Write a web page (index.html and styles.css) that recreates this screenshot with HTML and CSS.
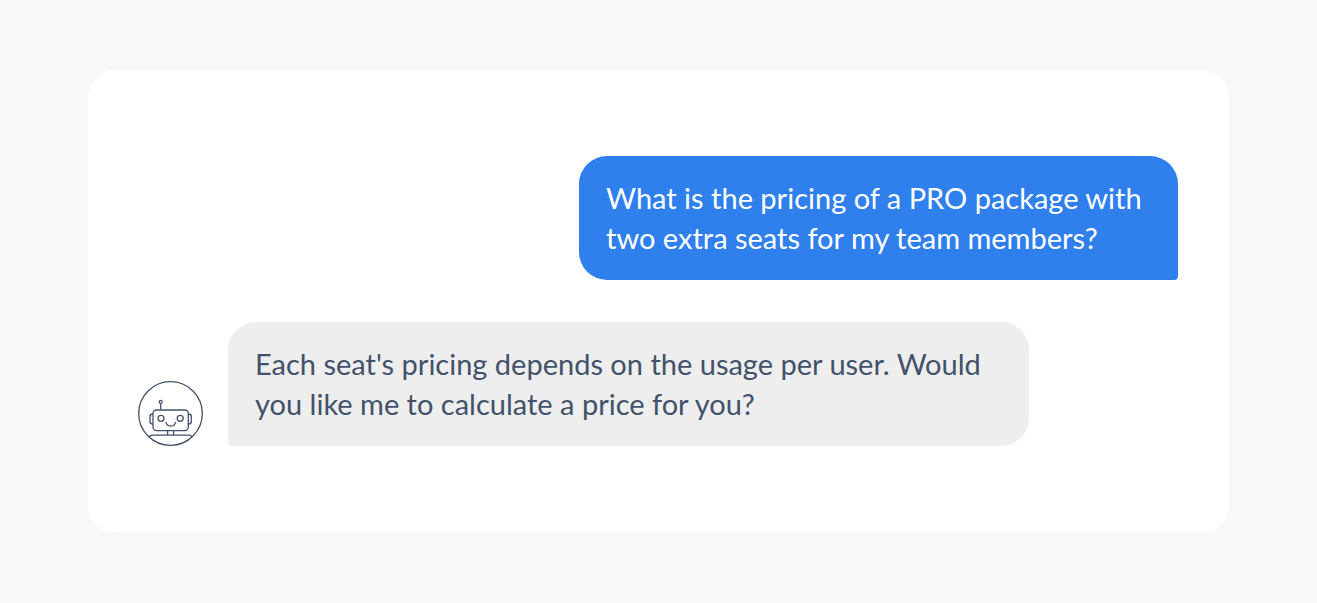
FILE: index.html
```html
<!DOCTYPE html>
<html lang="en">
<head>
    <meta charset="UTF-8">
    <meta name="viewport" content="width=device-width, initial-scale=1.0">
    <title>Chatbot</title>
    <link rel="stylesheet" href="styles.css">
</head>
<body>
    <main class="chat">
        <div class="message user">
            <p class="bubble">What is the pricing of a PRO package with two extra seats for my team members?</p>
        </div>
        <div class="message bot">
            <svg class="avatar" viewBox="0 0 65 65" role="img" aria-label="Bot">
                <circle cx="32.5" cy="32.5" r="31.8"/>
                <!-- antenna -->
                <circle cx="22.7" cy="20.9" r="1.5"/>
                <path d="M22.7 22.4V29"/>
                <!-- head and ears -->
                <rect x="15" y="29" width="35.3" height="20.6" rx="3.5"/>
                <path d="M15 33c-2 0-3 1-3 2.6v5c0 1.6 1 2.6 3 2.6M50.3 33c2 0 3 1 3 2.6v5c0 1.6-1 2.6-3 2.6"/>
                <!-- face -->
                <circle cx="23" cy="37.3" r="3"/>
                <circle cx="42.2" cy="37.3" r="3"/>
                <path d="M28 41c.5 5.4 9 5.4 9.5 0"/>
                <!-- neck and shoulders -->
                <path d="M29.6 49.6v4.6M35.6 49.6v4.6M10.6 56.2q1.4-2 4.4-2h36q2 0 3.2 2"/>
            </svg>
            <p class="bubble">Each seat's pricing depends on the usage per user. Would you like me to calculate a price for you?</p>
        </div>
    </main>
</body>
</html>
```
FILE: styles.css
```css
* {
    box-sizing: border-box;
}
body {
    margin: 0;
    padding: 70px 88px;
    background-color: #f6f8fa;
    font-family: Lato, "Liberation Sans", sans-serif;
    font-size: 29px;
    line-height: 40px;
}
.chat {
    display: flex;
    flex-direction: column;
    gap: 42px;
    padding: 86px 51px 87px 50px;
    background-color: #fff;
    border-radius: 28px;
}
.message {
    display: flex;
    align-items: flex-end;
    gap: 25px;
}
.user {
    justify-content: flex-end;
}
.bubble {
    margin: 0;
    padding: 22px 27px;
    border-radius: 28px;
}
.user .bubble {
    max-width: 599px;
    background-color: #2f80ed;
    color: #fff;
    border-bottom-right-radius: 4px;
}
.bot .bubble {
    max-width: 801px;
    background-color: #eee;
    color: #42526b;
    border-bottom-left-radius: 4px;
}
.avatar {
    flex: none;
    width: 65px;
    height: 65px;
    fill: none;
    stroke: #42526b;
    stroke-width: 1.3;
}
```
